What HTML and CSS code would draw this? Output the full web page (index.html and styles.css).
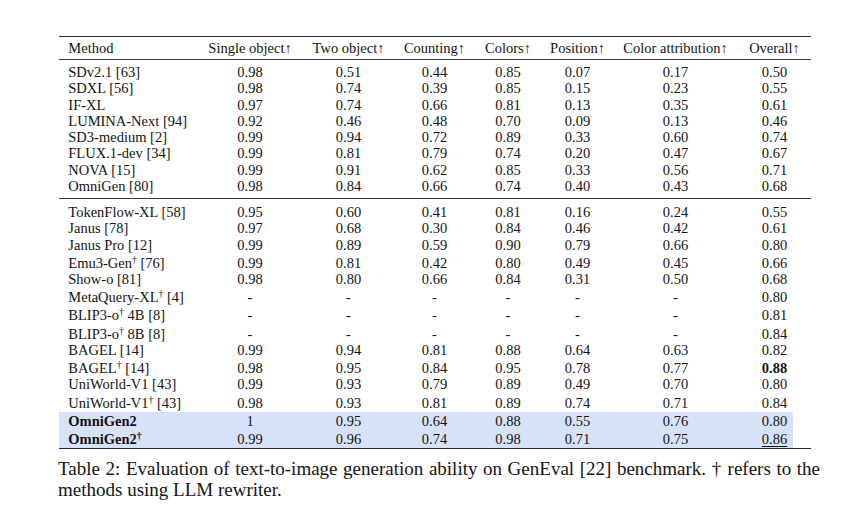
FILE: index.html
```html
<!DOCTYPE html>
<html lang="en">
<head>
<meta charset="utf-8">
<title>Table 2: GenEval</title>
<link rel="stylesheet" href="styles.css">
</head>
<body>
<div class="page">
  <div class="table">
    <div class="head">
      <div class="row">
        <div class="c m">Method</div>
        <div class="c">Single object↑</div>
        <div class="c">Two object↑</div>
        <div class="c">Counting↑</div>
        <div class="c">Colors↑</div>
        <div class="c">Position↑</div>
        <div class="c">Color attribution↑</div>
        <div class="c">Overall↑</div>
      </div>
    </div>
    <div class="group g1">
      <div class="row"><div class="c m">SDv2.1 [63]</div><div class="c">0.98</div><div class="c">0.51</div><div class="c">0.44</div><div class="c">0.85</div><div class="c">0.07</div><div class="c">0.17</div><div class="c">0.50</div></div>
      <div class="row"><div class="c m">SDXL [56]</div><div class="c">0.98</div><div class="c">0.74</div><div class="c">0.39</div><div class="c">0.85</div><div class="c">0.15</div><div class="c">0.23</div><div class="c">0.55</div></div>
      <div class="row"><div class="c m">IF-XL</div><div class="c">0.97</div><div class="c">0.74</div><div class="c">0.66</div><div class="c">0.81</div><div class="c">0.13</div><div class="c">0.35</div><div class="c">0.61</div></div>
      <div class="row"><div class="c m">LUMINA-Next [94]</div><div class="c">0.92</div><div class="c">0.46</div><div class="c">0.48</div><div class="c">0.70</div><div class="c">0.09</div><div class="c">0.13</div><div class="c">0.46</div></div>
      <div class="row"><div class="c m">SD3-medium [2]</div><div class="c">0.99</div><div class="c">0.94</div><div class="c">0.72</div><div class="c">0.89</div><div class="c">0.33</div><div class="c">0.60</div><div class="c">0.74</div></div>
      <div class="row"><div class="c m">FLUX.1-dev [34]</div><div class="c">0.99</div><div class="c">0.81</div><div class="c">0.79</div><div class="c">0.74</div><div class="c">0.20</div><div class="c">0.47</div><div class="c">0.67</div></div>
      <div class="row"><div class="c m">NOVA [15]</div><div class="c">0.99</div><div class="c">0.91</div><div class="c">0.62</div><div class="c">0.85</div><div class="c">0.33</div><div class="c">0.56</div><div class="c">0.71</div></div>
      <div class="row"><div class="c m">OmniGen [80]</div><div class="c">0.98</div><div class="c">0.84</div><div class="c">0.66</div><div class="c">0.74</div><div class="c">0.40</div><div class="c">0.43</div><div class="c">0.68</div></div>
    </div>
    <div class="group g2">
      <div class="row"><div class="c m">TokenFlow-XL [58]</div><div class="c">0.95</div><div class="c">0.60</div><div class="c">0.41</div><div class="c">0.81</div><div class="c">0.16</div><div class="c">0.24</div><div class="c">0.55</div></div>
      <div class="row"><div class="c m">Janus [78]</div><div class="c">0.97</div><div class="c">0.68</div><div class="c">0.30</div><div class="c">0.84</div><div class="c">0.46</div><div class="c">0.42</div><div class="c">0.61</div></div>
      <div class="row"><div class="c m">Janus Pro [12]</div><div class="c">0.99</div><div class="c">0.89</div><div class="c">0.59</div><div class="c">0.90</div><div class="c">0.79</div><div class="c">0.66</div><div class="c">0.80</div></div>
      <div class="row dag"><div class="c m">Emu3-Gen<sup>†</sup> [76]</div><div class="c">0.99</div><div class="c">0.81</div><div class="c">0.42</div><div class="c">0.80</div><div class="c">0.49</div><div class="c">0.45</div><div class="c">0.66</div></div>
      <div class="row"><div class="c m">Show-o [81]</div><div class="c">0.98</div><div class="c">0.80</div><div class="c">0.66</div><div class="c">0.84</div><div class="c">0.31</div><div class="c">0.50</div><div class="c">0.68</div></div>
      <div class="row dag"><div class="c m">MetaQuery-XL<sup>†</sup> [4]</div><div class="c">-</div><div class="c">-</div><div class="c">-</div><div class="c">-</div><div class="c">-</div><div class="c">-</div><div class="c">0.80</div></div>
      <div class="row dag"><div class="c m">BLIP3-o<sup>†</sup> 4B [8]</div><div class="c">-</div><div class="c">-</div><div class="c">-</div><div class="c">-</div><div class="c">-</div><div class="c">-</div><div class="c">0.81</div></div>
      <div class="row dag"><div class="c m">BLIP3-o<sup>†</sup> 8B [8]</div><div class="c">-</div><div class="c">-</div><div class="c">-</div><div class="c">-</div><div class="c">-</div><div class="c">-</div><div class="c">0.84</div></div>
      <div class="row"><div class="c m">BAGEL [14]</div><div class="c">0.99</div><div class="c">0.94</div><div class="c">0.81</div><div class="c">0.88</div><div class="c">0.64</div><div class="c">0.63</div><div class="c">0.82</div></div>
      <div class="row dag"><div class="c m">BAGEL<sup>†</sup> [14]</div><div class="c">0.98</div><div class="c">0.95</div><div class="c">0.84</div><div class="c">0.95</div><div class="c">0.78</div><div class="c">0.77</div><div class="c"><b>0.88</b></div></div>
      <div class="row"><div class="c m">UniWorld-V1 [43]</div><div class="c">0.99</div><div class="c">0.93</div><div class="c">0.79</div><div class="c">0.89</div><div class="c">0.49</div><div class="c">0.70</div><div class="c">0.80</div></div>
      <div class="row dag"><div class="c m">UniWorld-V1<sup>†</sup> [43]</div><div class="c">0.98</div><div class="c">0.93</div><div class="c">0.81</div><div class="c">0.89</div><div class="c">0.74</div><div class="c">0.71</div><div class="c">0.84</div></div>
    </div>
    <div class="group hl">
      <div class="row tall"><div class="c m"><b>OmniGen2</b></div><div class="c">1</div><div class="c">0.95</div><div class="c">0.64</div><div class="c">0.88</div><div class="c">0.55</div><div class="c">0.76</div><div class="c">0.80</div></div>
      <div class="row tall"><div class="c m"><b>OmniGen2<sup>†</sup></b></div><div class="c">0.99</div><div class="c">0.96</div><div class="c">0.74</div><div class="c">0.98</div><div class="c">0.71</div><div class="c">0.75</div><div class="c"><span class="ul">0.86</span></div></div>
    </div>
  </div>
  <p class="caption">Table 2: Evaluation of text-to-image generation ability on GenEval [22] benchmark. † refers to the methods using LLM rewriter.</p>
</div>
</body>
</html>
```

FILE: styles.css
```css
html, body {
  margin: 0;
  padding: 0;
  background: #ffffff;
}

body {
  font-family: "Liberation Serif", "Times New Roman", serif;
  color: #141414;
}

.page {
  padding-top: 35.5px;
  padding-left: 59px;
}

.table {
  width: 752px;
  border-top: 1.5px solid #2a2a2a;
  border-bottom: 1.5px solid #2a2a2a;
  font-size: 14.5px;
}

.head {
  padding: 3.2px 0 3px;
  border-bottom: 1px solid #3a3a3a;
}

.row {
  display: grid;
  grid-template-columns: 139px 104px 93px 79px 68px 71px 125px 73px;
  height: 16.3px;
  line-height: 16.3px;
  box-sizing: border-box;
  white-space: nowrap;
}

.row.dag {
  height: 18.2px;
  padding-top: 1.9px;
}

.row.tall {
  height: 18px;
  line-height: 18px;
}

.c {
  text-align: center;
}

.c.m {
  text-align: left;
  padding-left: 9.3px;
}

sup {
  font-size: 0.68em;
  line-height: 0;
  vertical-align: 0.5em;
}

.g1 {
  padding: 4px 0 3.6px;
  border-bottom: 1px solid #3a3a3a;
}

.g2 {
  padding: 5px 0 1.5px;
}

.hl {
  background: linear-gradient(to right, #d7e1f7 0, #d7e1f7 734px, transparent 734px);
}

.ul {
  text-decoration: underline;
  text-underline-offset: 2px;
  text-decoration-thickness: 1px;
}

.caption {
  margin: 9px 0 0 -1px;
  width: 762px;
  font-size: 19px;
  line-height: 21px;
  text-align: justify;
  color: #141414;
}
```
